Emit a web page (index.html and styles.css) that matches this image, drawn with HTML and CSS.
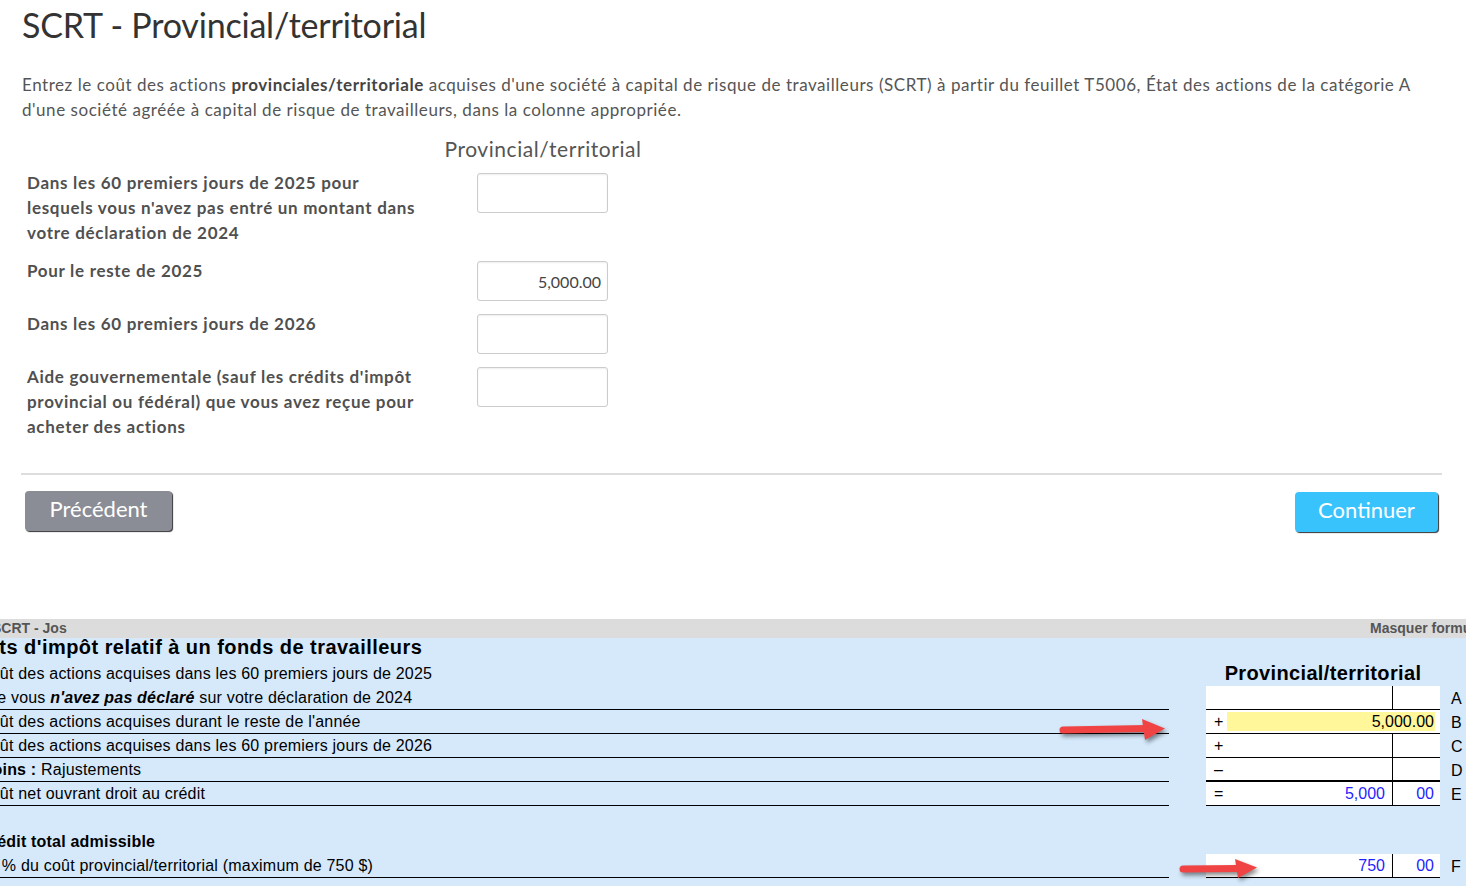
FILE: index.html
```html
<!DOCTYPE html>
<html lang="fr">
<head>
  <meta charset="UTF-8" />
  <title>SCRT - Provincial/territorial</title>
  <link rel="stylesheet" href="styles.css">
</head>
<body>

  <!-- Interview step -->
  <main class="page">
    <h1 class="title">SCRT - Provincial/territorial</h1>
    <p class="intro">Entrez le coût des actions <strong>provinciales/territoriale</strong> acquises d'une société à capital de risque de travailleurs (SCRT) à partir du feuillet T5006, État des actions de la catégorie A d'une société agréée à capital de risque de travailleurs, dans la colonne appropriée.</p>

    <div class="entry">
      <div class="entry-head">Provincial/territorial</div>
      <div class="entry-row">
        <label for="f1">Dans les 60 premiers jours de 2025 pour lesquels vous n'avez pas entré un montant dans votre déclaration de 2024</label>
        <input type="text" id="f1" value="">
      </div>
      <div class="entry-row">
        <label for="f2">Pour le reste de 2025</label>
        <input type="text" id="f2" value="5,000.00">
      </div>
      <div class="entry-row">
        <label for="f3">Dans les 60 premiers jours de 2026</label>
        <input type="text" id="f3" value="">
      </div>
      <div class="entry-row">
        <label for="f4">Aide gouvernementale (sauf les crédits d'impôt provincial ou fédéral) que vous avez reçue pour acheter des actions</label>
        <input type="text" id="f4" value="">
      </div>
    </div>

    <hr class="divider">

    <div class="actions">
      <button class="btn btn-back">Précédent</button>
      <button class="btn btn-next">Continuer</button>
    </div>
  </main>

  <!-- Form view -->
  <section class="form-view">
    <div class="form-inner">
      <div class="form-bar">
        <span>SCRT - Jos</span>
        <span class="form-toggle">Masquer formulaire</span>
      </div>

      <h2 class="form-title">Crédits d'impôt relatif à un fonds de travailleurs</h2>

      <div class="frow frow-tall">
        <div class="flabel">Coût des actions acquises dans les 60 premiers jours de 2025<br>que vous <b><i>n'avez pas déclaré</i></b> sur votre déclaration de 2024</div>
        <div class="fcol">
          <div class="fhead">Provincial/territorial</div>
          <div class="fbox"><span class="sign"></span><span class="amt"></span><span class="cents"></span></div>
        </div>
        <div class="fletter">A</div>
      </div>

      <div class="frow">
        <div class="flabel">Coût des actions acquises durant le reste de l'année</div>
        <div class="fbox"><span class="sign">+</span><span class="field">5,000.00</span></div>
        <div class="fletter">B</div>
      </div>

      <div class="frow">
        <div class="flabel">Coût des actions acquises dans les 60 premiers jours de 2026</div>
        <div class="fbox"><span class="sign">+</span><span class="amt"></span><span class="cents"></span></div>
        <div class="fletter">C</div>
      </div>

      <div class="frow">
        <div class="flabel"><b>Moins :</b> Rajustements</div>
        <div class="fbox fbox-total"><span class="sign">–</span><span class="amt"></span><span class="cents"></span></div>
        <div class="fletter">D</div>
      </div>

      <div class="frow">
        <div class="flabel">Coût net ouvrant droit au crédit</div>
        <div class="fbox"><span class="sign">=</span><span class="amt calc">5,000</span><span class="cents calc">00</span></div>
        <div class="fletter">E</div>
      </div>

      <div class="frow frow-blank"></div>

      <div class="frow">
        <div class="flabel plain"><b>Crédit total admissible</b></div>
      </div>

      <div class="frow">
        <div class="flabel">15 % du coût provincial/territorial (maximum de 750 $)</div>
        <div class="fbox"><span class="sign"></span><span class="amt calc">750</span><span class="cents calc">00</span></div>
        <div class="fletter">F</div>
      </div>
    </div>

    <!-- callout arrows -->
    <svg class="arrows" width="1466" height="280" viewBox="0 0 1466 280">
      <g fill="#f04444">
        <path d="M1063 107.5 L1146 106 L1146 113 L1063 114.5 A3.5 3.5 0 0 1 1063 107.5 Z" />
        <path d="M1142 100 L1165 109.5 L1145 121 Z" />
        <path d="M1183 246.5 L1238 246 L1238 253 L1183 253.5 A3.5 3.5 0 0 1 1183 246.5 Z" />
        <path d="M1235 240 L1257 248.5 L1238 259 Z" />
      </g>
    </svg>
  </section>

</body>
</html>
```

FILE: styles.css
```css
* {
  box-sizing: border-box;
}

body {
  margin: 0;
  background: #fff;
  font-family: Lato, "Open Sans", sans-serif;
}

/* interview step */
.page {
  padding: 5px 24px 0 21px;
}

.title {
  margin: 0 0 0 1px;
  font-size: 34px;
  font-weight: 400;
  line-height: 40px;
  letter-spacing: -0.2px;
  color: #333;
}

.intro {
  margin: 27px 0 0 1px;
  font-size: 17px;
  line-height: 25px;
  letter-spacing: 0.55px;
  color: #555;
}

.intro strong {
  color: #444;
  font-weight: 700;
}

.entry {
  margin-left: 6px;
}

.entry-head {
  width: 240px;
  margin: 14px 0 9px 396px;
  text-align: center;
  font-size: 21px;
  line-height: 25px;
  letter-spacing: 0.55px;
  color: #555;
}

.entry-row {
  display: flex;
  align-items: flex-start;
  margin-bottom: 10px;
}

.entry-row label {
  width: 400px;
  margin-right: 50px;
  padding-bottom: 3px;
  font-size: 17px;
  font-weight: 700;
  line-height: 25px;
  letter-spacing: 0.7px;
  color: #505050;
}

.entry-row input {
  width: 131px;
  height: 40px;
  margin: 3px 0 0;
  padding: 0 6px;
  border: 1px solid #ccc;
  border-radius: 3px;
  box-shadow: inset 0 1px 2px rgba(0, 0, 0, 0.07);
  font: 16px Lato, sans-serif;
  color: #444;
  text-align: right;
}

.divider {
  margin: 31px 0 0;
  border: 0;
  border-top: 2px solid #ddd;
}

.actions {
  display: flex;
  justify-content: space-between;
  margin-top: 16px;
  padding: 0 4px;
}

.btn {
  height: 40px;
  border: 0;
  border-radius: 4px;
  box-shadow: 1px 1px 1px #333;
  color: #fff;
  font: 22px Lato, sans-serif;
  padding: 0 0 5px;
}

.btn-back {
  width: 147px;
  background: #8a8d95;
}

.btn-next {
  width: 143px;
  margin-top: 1px;
  background: #39c3fd;
}

/* form view */
.form-view {
  position: relative;
  height: 280px;
  margin-top: 87px;
  background: #d5e9fb;
  overflow: hidden;
}

.form-inner {
  width: 1600px;
  margin-left: -54px;
  font-family: "Liberation Sans", Arial, sans-serif;
  color: #000;
}

.form-bar {
  display: flex;
  justify-content: space-between;
  height: 19px;
  padding: 0 46px 0 46px;
  background: #dcdcdc;
  font-size: 14px;
  font-weight: 700;
  line-height: 19px;
  color: #555;
}

.form-title {
  height: 24px;
  margin: 0;
  font-size: 20px;
  line-height: 18px;
  letter-spacing: 0.45px;
}

.frow {
  display: flex;
  align-items: flex-end;
  height: 24px;
  font-size: 16px;
  line-height: 23px;
}

.frow-tall {
  height: 48px;
}

.flabel {
  width: 1190px;
  height: 100%;
  margin-left: 33px;
  border-bottom: 1px solid #000;
  line-height: 24px;
  letter-spacing: 0.2px;
}

.flabel.plain {
  border-bottom: 0;
}

.fcol {
  display: flex;
  flex-direction: column;
  width: 234px;
  margin-left: 37px;
}

.fhead {
  margin-bottom: 4px;
  text-align: center;
  font-size: 20px;
  font-weight: 700;
  line-height: 18px;
  letter-spacing: 0.35px;
}

.fbox {
  display: flex;
  width: 234px;
  height: 24px;
  margin-left: 37px;
  background: #fff;
  border-bottom: 1px solid #000;
}

.fcol .fbox {
  margin-left: 0;
}

.fbox-total {
  border-bottom-width: 2px;
}

.sign {
  width: 21px;
  padding-left: 8px;
}

.amt {
  width: 166px;
  padding-right: 7px;
  border-right: 1px solid #000;
  text-align: right;
}

.cents {
  flex: 1;
  padding-right: 6px;
  text-align: right;
}

.calc {
  color: #1f1fff;
}

.field {
  width: 208px;
  height: 19px;
  margin-top: 2px;
  padding-right: 1px;
  background: #fff799;
  line-height: 19px;
  text-align: right;
}

.fletter {
  padding-left: 11px;
}

.frow-blank {
  height: 24px;
}

.arrows {
  position: absolute;
  left: 0;
  top: 0;
  pointer-events: none;
  filter: drop-shadow(2px 3px 2px rgba(0, 0, 0, 0.45));
}
```
